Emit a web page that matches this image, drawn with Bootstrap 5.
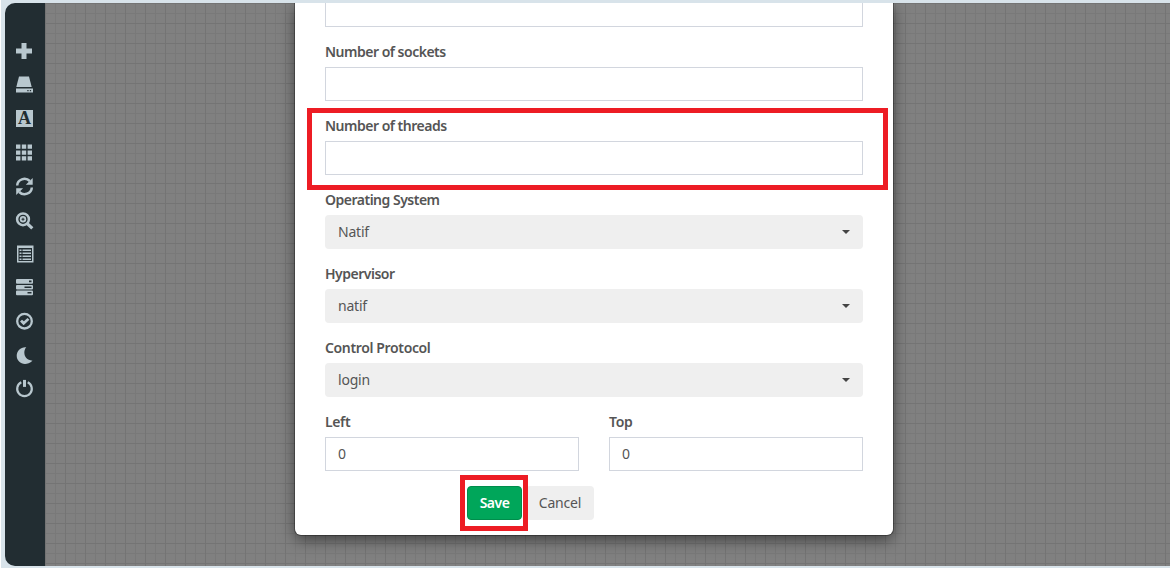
<!DOCTYPE html>
<html lang="en">
<head>
<meta charset="utf-8">
<meta name="viewport" content="width=device-width, initial-scale=1">
<title>Edit node</title>
<link href="https://cdn.jsdelivr.net/npm/bootstrap@5.3.0/dist/css/bootstrap.min.css" rel="stylesheet">
<style>
body{font-family:"Noto Sans","Open Sans",sans-serif;font-size:14px;line-height:20px;color:#555;background:#d8e3ea;height:568px}
.shell{height:568px;padding:3px 0 2px 4px;border-left:1px solid #fff}
.side{width:40px;background:#222d32;border-radius:10px 0 0 10px;padding-top:37px;flex:none}
.side a{height:33.75px;display:block;padding-left:10px;line-height:0}
.side svg{width:20px;height:22px;fill:#b8c7ce;stroke:none}
.canvas{background-color:#808080;background-image:linear-gradient(90deg,#747474 1px,transparent 1px),linear-gradient(#747474 1px,transparent 1px),linear-gradient(90deg,#797979 1px,transparent 1px),linear-gradient(#797979 1px,transparent 1px);background-size:20px 20px;background-position:0 0,0 0,10px 0,0 10px}
.dialog{width:598px;height:532px;margin-left:250px;padding:0 30px;background:#fff;border-radius:0 0 6px 6px;box-shadow:0 0 0 1px rgba(0,0,0,.3),0 5px 15px rgba(0,0,0,.5)}
.group{margin-bottom:15px;position:relative}
.group label{display:block;height:20px;margin-bottom:5px;font-weight:600;letter-spacing:-.5px;white-space:nowrap}
.group .looser{letter-spacing:-.36px}
.form-control{height:34px;border-radius:0;border-color:#d2d6de;padding:5px 12px 7px;font-size:14px;line-height:20px;color:#555}
.picker{height:34px;background:#efefef;border:0;border-radius:4px;width:100%;padding:7px 13px;font-size:14px;line-height:20px;color:#555;letter-spacing:-.2px}
.picker::after{border-top:4px solid #444;border-left:4px solid transparent;border-right:4px solid transparent;margin:0}
.first-field{height:24px;border-top:0}
.outline-red{position:absolute;border:5px solid #ed1c24;pointer-events:none}
.outline-field{left:-18px;top:-8px;width:581px;height:82px}
.outline-save{left:-7px;top:-11px;width:68px;height:56px}
.actions{padding-left:142px}
.actions .btn{height:34px;padding:6px 0;font-size:14px;line-height:20px;border-radius:4px}
.save{width:55px;background:#00a65a!important;border-color:#008d4c!important;color:#fff!important;font-weight:600;letter-spacing:-.5px}
.cancel{width:68px;margin-left:4px;background:#efefef!important;color:#555!important;border:0;letter-spacing:-.2px}
</style>
</head>
<body class="overflow-hidden">
<div class="shell d-flex">
<nav class="side">
<a href="#"><svg viewBox="0 0 20 22"><path d="M6.500 3h5v5.500H17v5h-5.500V19h-5v-5.500H1v-5h5.500z"/></svg></a>
<a href="#"><svg viewBox="0 0 20 22"><path d="M4 2.500h10l2.700 10.500H1.300z"/><path fill-rule="evenodd" d="M1 14.500h17v4H1zM12.300 16v1.300h1.300V16zm2.500 0v1.300h1.300V16z"/></svg></a>
<a href="#"><svg viewBox="0 0 20 22"><path d="M1 2h17v17H1z"/><text x="9.500" y="16" text-anchor="middle" font-family="Liberation Serif,serif" font-size="18" font-weight="700" style="fill:#222d32">A</text></svg></a>
<a href="#"><svg viewBox="0 0 20 22"><path d="M1 3.500h4.400v4.300H1zm5.800 0h4.400v4.300H6.800zm5.800 0H17v4.300h-4.400zM1 9.400h4.400v4.300H1zm5.800 0h4.400v4.300H6.800zm5.800 0H17v4.300h-4.400zM1 15.300h4.400v4.300H1zm5.800 0h4.400v4.300H6.800zm5.800 0H17v4.300h-4.400z"/></svg></a>
<a href="#"><svg viewBox="0 0 20 22"><path d="M2.200 10.500a7.300 6.800 0 0 1 12.600-4.500M16.800 12.500a7.300 6.800 0 0 1-12.600 4.500" style="fill:none;stroke:#b8c7ce;stroke-width:2.500"/><path d="M17.700 3v6.700h-6.900zM1.200 20v-6.700h6.900z"/></svg></a>
<a href="#"><svg viewBox="0 0 20 22"><g transform="translate(0 .8)"><circle cx="8" cy="9.500" r="5.900" style="fill:none;stroke:#b8c7ce;stroke-width:2.500"/><circle cx="8" cy="9.500" r="3.200"/><path d="M12 13.500l5.300 5" style="stroke:#b8c7ce;stroke-width:3.200"/><path d="M7.500 8h1v1h1v1h-1v1h-1v-1h-1V9h1z" style="fill:#222d32"/></g></svg></a>
<a href="#"><svg viewBox="0 0 20 22"><path fill-rule="evenodd" d="M2 2.500h16.500v17H2zM3.500 5v13H17V5z"/><path d="M4.500 6.500h2v1.500h-2zm3 0H16v1.500H7.500zm-3 3h2V11h-2zm3 0H16V11H7.500zm-3 3h2V14h-2zm3 0H16V14H7.500zm-3 3h2V17h-2zm3 0H16V17H7.500z"/></svg></a>
<a href="#"><svg viewBox="0 0 20 22"><path fill-rule="evenodd" d="M2 3h15q1 0 1 1v2.800q0 1-1 1H2q-1 0-1-1V4q0-1 1-1zm12 1.500v1.700h2.500V4.500zM2 8.900h15q1 0 1 1v2.500q0 1-1 1H2q-1 0-1-1V9.900q0-1 1-1zm7.500 1.500v1.500h7v-1.500zM2 14.500h15q1 0 1 1v2.800q0 1-1 1H2q-1 0-1-1v-2.800q0-1 1-1zM12.500 16v1.500h4V16z"/></svg></a>
<a href="#"><svg viewBox="0 0 20 22"><circle cx="9.500" cy="11.200" r="7.300" style="fill:none;stroke:#b8c7ce;stroke-width:2.300"/><path d="M5 11.400l2-1.700 1.900 1.500 3.600-3.300 1.900 1.900-5.800 5.500z"/></svg></a>
<a href="#"><svg viewBox="0 0 20 22"><path d="M11.300 3.300C7.500 7.300 9 16.500 17.500 16.700 10 23.500 1.700 18.500 1.700 11.800c0-5 4.500-9.200 9.600-8.500z"/></svg></a>
<a href="#"><svg viewBox="0 0 20 22"><g transform="translate(0 -.6)"><path d="M6.300 4.900a7.300 7.300 0 1 0 6.400 0" style="fill:none;stroke:#b8c7ce;stroke-width:2.200"/><path d="M8 2.500h3v7H8z"/></g></svg></a>
</nav>
<main class="canvas flex-grow-1 overflow-hidden">
<form class="dialog">
<div class="group"><input class="form-control first-field" aria-label="Cores"></div>
<div class="group"><label>Number of sockets</label><input class="form-control"></div>
<div class="group"><label>Number of threads</label><input class="form-control"><span class="outline-red outline-field"></span></div>
<div class="group"><label>Operating System</label><button type="button" class="picker dropdown-toggle d-flex align-items-center justify-content-between">Natif</button></div>
<div class="group"><label>Hypervisor</label><button type="button" class="picker dropdown-toggle d-flex align-items-center justify-content-between">natif</button></div>
<div class="group"><label class="looser">Control Protocol</label><button type="button" class="picker dropdown-toggle d-flex align-items-center justify-content-between">login</button></div>
<div class="row" style="--bs-gutter-x:30px">
<div class="col-6"><div class="group"><label class="looser">Left</label><input class="form-control" value="0"></div></div>
<div class="col-6"><div class="group"><label class="looser">Top</label><input class="form-control" value="0"></div></div>
</div>
<div class="actions d-flex"><div class="position-relative"><button type="button" class="btn save">Save</button><span class="outline-red outline-save"></span></div><button type="button" class="btn cancel">Cancel</button></div>
</form>
</main>
</div>
<script src="https://cdn.jsdelivr.net/npm/bootstrap@5.3.0/dist/js/bootstrap.bundle.min.js"></script>
</body>
</html>
